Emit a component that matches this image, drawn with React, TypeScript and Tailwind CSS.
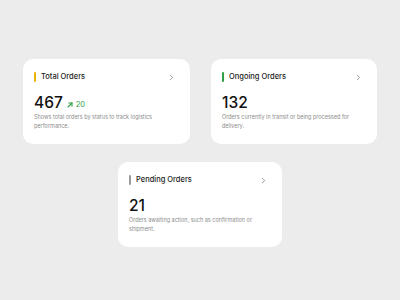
import React from "react";
import { ChevronRight } from "lucide-react";

type Stat = {
  title: string;
  value: string;
  bar: string;
  change?: string;
  description: string;
};

const stats: Stat[] = [
  {
    title: "Total Orders",
    value: "467",
    bar: "bg-[#eab308]",
    change: "20",
    description: "Shows total orders by status to track logistics performance.",
  },
  {
    title: "Ongoing Orders",
    value: "132",
    bar: "bg-[#2f9e44]",
    description: "Orders currently in transit or being processed for delivery.",
  },
  {
    title: "Pending Orders",
    value: "21",
    bar: "bg-[#9a9a9a]",
    description: "Orders awaiting action, such as confirmation or shipment.",
  },
];

function StatCard({ stat, width }: { stat: Stat; width: string }) {
  return (
    <div className={`${width} bg-white rounded-[10px] pl-[11px] pr-[14px] pt-[13px] pb-[13px]`}>
      <div className="flex items-center justify-between h-[10px]">
        <div className="flex items-center gap-[5px]">
          <span className={`w-[2px] h-[10px] rounded-full ${stat.bar}`}></span>
          <span className="text-[7.5px] font-medium text-[#1c1c1c] leading-[10px]">{stat.title}</span>
        </div>
        <ChevronRight size={9} strokeWidth={1.6} className="text-[#555]" />
      </div>

      <div className="flex items-center gap-[4px] mt-[11px]">
        <span className="text-[15.5px] font-medium text-[#111] leading-[20px]">
          {stat.value}
        </span>
        {stat.change && (
          <span className="flex items-center gap-[3px] text-[7.5px] text-[#2f9e44] mt-[3px]">
            {/* small up-right arrow */}
            <svg width="6" height="6" viewBox="0 0 6 6" fill="none" stroke="currentColor" strokeWidth="1.1" strokeLinecap="round" strokeLinejoin="round">
              <path d="M1 5 L5 1" />
              <path d="M1.8 1 H5 V4.2" />
            </svg>
            {stat.change}
          </span>
        )}
      </div>

      <p className="text-[5.5px] leading-[9px] text-[#8c8c8c]">{stat.description}</p>
    </div>
  );
}

export default function App() {
  return (
    <div
      className="w-[400px] h-[300px] bg-[#ececec] flex flex-col items-center pt-[59px]"
      style={{ fontFamily: "Inter, 'Noto Sans', sans-serif" }}
    >
      <div className="flex gap-[21px]">
        <StatCard stat={stats[0]} width="w-[167px]" />
        <StatCard stat={stats[1]} width="w-[166px]" />
      </div>
      <div className="mt-[18px]">
        <StatCard stat={stats[2]} width="w-[164px]" />
      </div>
    </div>
  );
}
